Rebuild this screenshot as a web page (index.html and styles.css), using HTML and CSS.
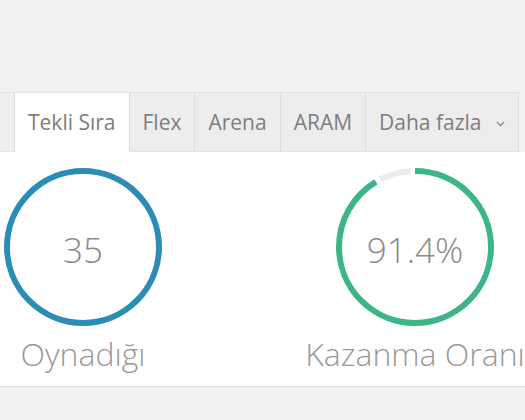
FILE: index.html
```html
<!DOCTYPE html>
<html lang="tr">
<head>
    <meta charset="UTF-8">
    <title>Profil</title>
    <link rel="stylesheet" href="styles.css">
</head>
<body>
    <div class="page">
        <ul class="tabs">
            <li class="tab tab-cut"></li>
            <li class="tab active">Tekli Sıra</li>
            <li class="tab">Flex</li>
            <li class="tab">Arena</li>
            <li class="tab">ARAM</li>
            <li class="tab">Daha fazla
                <svg class="chevron" width="9" height="6" viewBox="0 0 9 6"><polyline points="1,1 4.5,4.5 8,1" fill="none" stroke="#8a8a8a" stroke-width="1.3"/></svg>
            </li>
        </ul>

        <div class="panel">
            <div class="stats">
                <div class="stat">
                    <div class="ring">
                        <svg width="160" height="160" viewBox="0 0 160 160">
                            <circle cx="80" cy="80" r="76" fill="none" stroke="#2b8db5" stroke-width="6"/>
                        </svg>
                        <span class="ring-value">35</span>
                    </div>
                    <div class="stat-label">Oynadığı</div>
                </div>
                <div class="stat">
                    <div class="ring">
                        <svg width="160" height="160" viewBox="0 0 160 160">
                            <g transform="rotate(-90 80 80)">
                                <circle cx="80" cy="80" r="76" fill="none" stroke="#ececec" stroke-width="6" pathLength="100" stroke-dasharray="0 92.4 6.6 1"/>
                                <circle cx="80" cy="80" r="76" fill="none" stroke="#3cb587" stroke-width="6" pathLength="100" stroke-dasharray="91.4 8.6"/>
                            </g>
                        </svg>
                        <span class="ring-value">91.4%</span>
                    </div>
                    <div class="stat-label">Kazanma Oranı</div>
                </div>
            </div>
        </div>
    </div>
</body>
</html>
```

FILE: styles.css
```css
html, body {
    margin: 0;
    padding: 0;
}

body {
    font-family: "Open Sans", Arial, sans-serif;
    background: #f2f2f2;
    width: 525px;
    height: 420px;
    overflow: hidden;
}

.page {
    padding-top: 92px;
}

.tabs {
    display: flex;
    list-style: none;
    margin: 0;
    padding: 0;
}

.tab {
    box-sizing: border-box;
    height: 60px;
    padding: 0 13px;
    display: flex;
    align-items: center;
    gap: 14px;
    font-size: 21px;
    color: #7d7d7d;
    background: #ededed;
    border-top: 1px solid #e2e2e2;
    border-right: 1px solid #dcdcdc;
    border-bottom: 1px solid #e4e4e4;
    white-space: nowrap;
}

.tab-cut {
    width: 15px;
    padding: 0;
    background: #efefef;
}

.tab.active {
    background: #fff;
    border-bottom-color: #fff;
}

.chevron {
    margin-top: 3px;
}

.panel {
    background: #fff;
    height: 234px;
    border-bottom: 1px solid #dedede;
    overflow: hidden;
}

.stats {
    display: flex;
    margin-left: -83px;
    padding-top: 15px;
}

.stat {
    flex: none;
    width: 332px;
    display: flex;
    flex-direction: column;
    align-items: center;
}

.ring {
    position: relative;
    width: 160px;
    height: 160px;
}

.ring svg {
    display: block;
}

.ring-value {
    position: absolute;
    inset: 4px 0 0;
    display: flex;
    align-items: center;
    justify-content: center;
    font-size: 35px;
    font-weight: 300;
    color: #8a8a8a;
}

.stat-label {
    margin-top: 5px;
    font-size: 32px;
    font-weight: 300;
    color: #999;
    white-space: nowrap;
}
```
